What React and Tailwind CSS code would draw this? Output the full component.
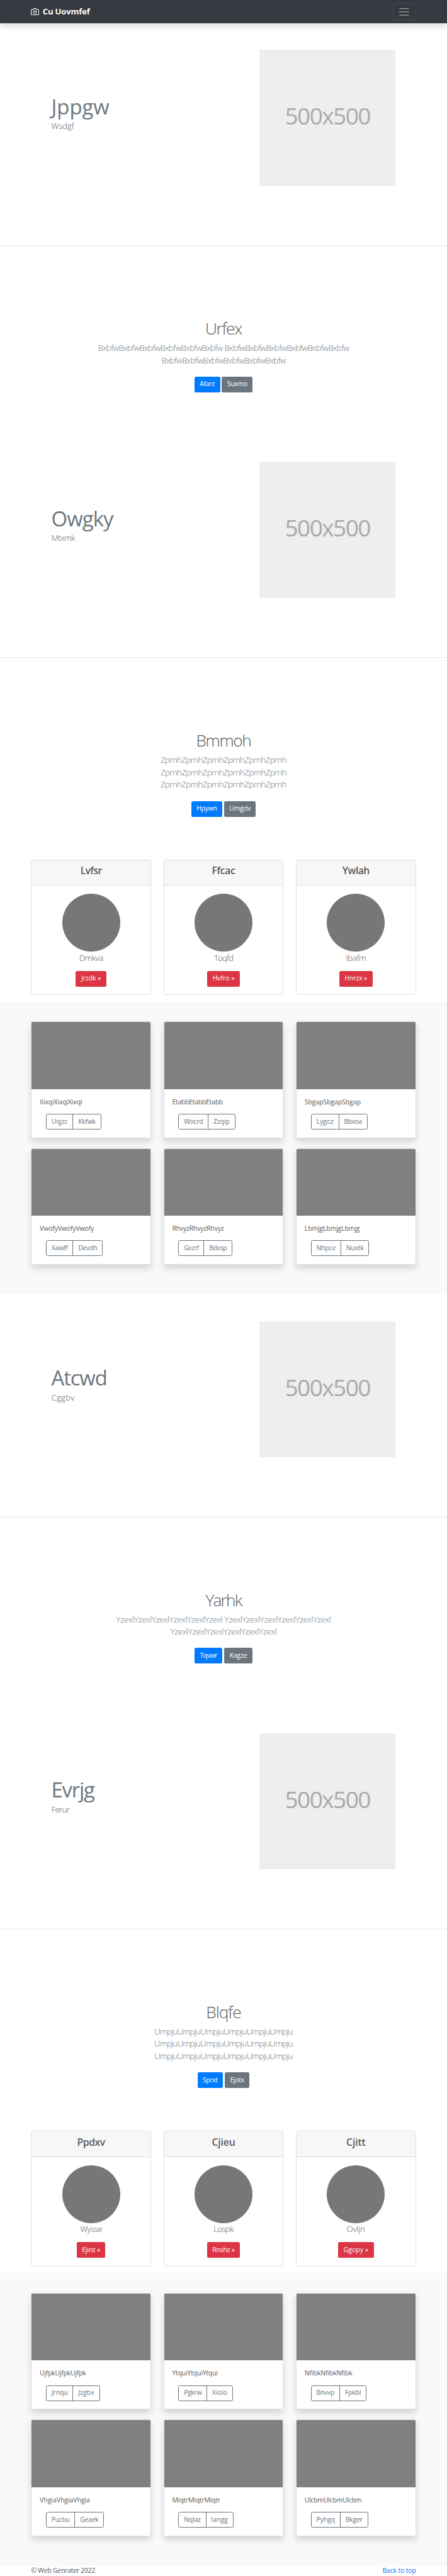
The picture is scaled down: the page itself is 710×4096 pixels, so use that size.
import React, { useLayoutEffect, useRef, useState } from "react";

/* A single-line label whose tracking is adjusted so that it fills `w` pixels. */
function Fit({ w, children }) {
  const ref = useRef(null);
  const [spacing, setSpacing] = useState(0);
  useLayoutEffect(() => {
    const el = ref.current;
    const previous = el.style.letterSpacing;
    el.style.letterSpacing = "0px";
    const natural = el.getBoundingClientRect().width;
    el.style.letterSpacing = previous;
    setSpacing((w - natural) / el.textContent.length);
  }, [w, children]);
  return (
    <span ref={ref} className="inline-block whitespace-nowrap" style={{ letterSpacing: `${spacing}px` }}>
      {children}
    </span>
  );
}

function Navbar() {
  return (
    <header className="relative z-10 flex h-[36.83px] items-center justify-between bg-[#343a40] px-[49.3px] shadow-[0_5.3px_10.5px_rgba(0,0,0,0.15)]">
      <a className="flex items-center text-white">
        <svg
          className="mr-[5.3px] h-[13.15px] w-[13.15px]"
          viewBox="0 0 24 24"
          fill="none"
          stroke="currentColor"
          strokeWidth="2"
          strokeLinecap="round"
          strokeLinejoin="round"
        >
          <path d="M23 19a2 2 0 0 1-2 2H3a2 2 0 0 1-2-2V8a2 2 0 0 1 2-2h4l2-3h6l2 3h4a2 2 0 0 1 2 2z" />
          <circle cx="12" cy="13" r="4" />
        </svg>
        <strong className="text-[13.15px] leading-[19.7px] font-bold">
          <Fit w={75}>Cu Uovmfef</Fit>
        </strong>
      </a>
      <button className="flex h-[26.3px] w-[36.8px] items-center justify-center rounded-[2.6px] border border-white/10">
        <svg className="h-[19.7px] w-[19.7px]" viewBox="0 0 30 30" stroke="rgba(255,255,255,0.5)" strokeWidth="2" strokeLinecap="round" strokeMiterlimit="10">
          <path d="M4 7h22M4 15h22M4 23h22" />
        </svg>
      </button>
    </header>
  );
}

function Featurette({ title, lead }) {
  return (
    <>
      <section className="flex h-[353.2px] justify-between px-[81.6px]">
        <div className="pt-[112.9px]">
          <h2 className="text-[32.87px] leading-[39.4px] font-normal text-[#6c757d]">
            <Fit w={title[1]}>{title[0]}</Fit>
          </h2>
          <p className="mt-[1.8px] text-[13.15px] leading-[19.72px] font-light text-[#5a5a5a]">
            <Fit w={lead[1]}>{lead[0]}</Fit>
          </p>
        </div>
        <div className="mt-[42.1px] flex h-[216.6px] w-[216.4px] items-center justify-center bg-[#eeeeee] pb-[6px]">
          <span className="text-[37px] leading-[44px] text-[#aaaaaa]">
            <Fit w={135.5}>500x500</Fit>
          </span>
        </div>
      </section>
      <hr className="h-px border-0 bg-[#e8e8e8]" />
    </>
  );
}

function Jumbotron({ title, lines, primary, secondary, tall }) {
  return (
    <section className={tall ? "h-[320.6px] pt-[116.4px] text-center" : "h-[300.85px] pt-[116.4px] text-center"}>
      <h1 className="text-[26.3px] leading-[31.6px] font-light text-[#5a5a5a]">
        <Fit w={title[1]}>{title[0]}</Fit>
      </h1>
      <div className="mt-[4.95px] text-[13.15px] leading-[19.72px] font-light text-[#6c757d]">
        {lines.map(([line, w], i) => (
          <p key={i} className="h-[19.72px]">
            <Fit w={w}>{line}</Fit>
          </p>
        ))}
      </div>
      <div className="mt-[15.4px] flex justify-center gap-[2.8px] text-[10.52px] text-white">
        <a className="flex h-[25px] items-center rounded-[2.6px] bg-[#007bff] px-[8.5px]">
          <Fit w={primary[1]}>{primary[0]}</Fit>
        </a>
        <a className="flex h-[25px] items-center rounded-[2.6px] bg-[#6c757d] px-[8.5px]">
          <Fit w={secondary[1]}>{secondary[0]}</Fit>
        </a>
      </div>
    </section>
  );
}

function ProfileCards({ cards }) {
  return (
    <section className="grid h-[226.2px] grid-cols-3 items-start gap-[19.7px] px-[49.3px] text-center">
      {cards.map(([title, name, action]) => (
        <article key={title[0]} className="h-[215.6px] rounded-[2.6px] border border-[#dfdfdf]">
          <h4 className="h-[40.5px] border-b border-[#dfdfdf] bg-[#f7f7f7] pt-[7.6px] text-[15.78px] leading-[19px] font-semibold text-[#5a5a5a]">
            <Fit w={title[1]}>{title[0]}</Fit>
          </h4>
          <div className="flex flex-col items-center pt-[13.15px]">
            <div className="h-[92.04px] w-[92.04px] rounded-full bg-[#777777]" />
            <p className="mt-[0.4px] h-[19.72px] text-[13.15px] leading-[19.72px] font-light text-[#5a5a5a]">
              <Fit w={name[1]}>{name[0]}</Fit>
            </p>
            <a className="mt-[10.2px] flex h-[25px] items-center rounded-[2.6px] bg-[#dc3545] px-[8.5px] text-[10.52px] text-white">
              <Fit w={action[1]}>{`${action[0]} »`}</Fit>
            </a>
          </div>
        </article>
      ))}
    </section>
  );
}

function Album({ items }) {
  return (
    <section className="grid h-[465.6px] grid-cols-3 content-start gap-x-[19.7px] gap-y-[16px] bg-[#f8f9fa] px-[49.3px] pt-[31.6px]">
      {items.map(([text, left, right]) => (
        <article
          key={text[0]}
          className="h-[185.3px] overflow-hidden rounded-[2.6px] border border-[#dfdfdf] bg-white shadow-[0_5.3px_10.5px_rgba(0,0,0,0.15)]"
        >
          <div className="h-[106.2px] bg-[#808080]" />
          <div className="px-[12.8px] pt-[13.15px]">
            <p className="h-[15.78px] text-[10.52px] leading-[15.78px] text-[#5a5a5a]">
              <Fit w={text[1]}>{text[0]}</Fit>
            </p>
            <div className="mt-[10.5px] ml-[9.9px] flex h-[25px] w-fit divide-x divide-[#6c757d] rounded-[2.6px] border border-[#6c757d] text-[10.52px] text-[#6c757d]">
              <span className="flex items-center px-[7.8px]">
                <Fit w={left[1]}>{left[0]}</Fit>
              </span>
              <span className="flex items-center px-[7.8px]">
                <Fit w={right[1]}>{right[0]}</Fit>
              </span>
            </div>
          </div>
        </article>
      ))}
    </section>
  );
}

export default function App() {
  return (
    <div className="w-[710px] overflow-hidden bg-white font-['Segoe_UI','Open_Sans',sans-serif]">
      <Navbar />

      <Featurette title={["Jppgw", 92]} lead={["Wsdgf", 35.6]} />
      <Jumbotron
        title={["Urfex", 58]}
        lines={[
          ["BxbfwBxbfwBxbfwBxbfwBxbfwBxbfw BxbfwBxbfwBxbfwBxbfwBxbfwBxbfw", 399],
          ["BxbfwBxbfwBxbfwBxbfwBxbfwBxbfw", 197.4],
        ]}
        primary={["Afarz", 23.7]}
        secondary={["Suxmo", 31.9]}
      />
      <Featurette title={["Owgky", 98]} lead={["Mtxmk", 37]} />
      <Jumbotron
        tall
        title={["Bmmoh", 87]}
        lines={[
          ["ZprnhZprnhZprnhZprnhZprnhZprnh", 200],
          ["ZprnhZprnhZprnhZprnhZprnhZprnh", 200],
          ["ZprnhZprnhZprnhZprnhZprnhZprnh", 200],
        ]}
        primary={["Hpywn", 32.4]}
        secondary={["Umgdv", 33.7]}
      />
      <ProfileCards
        cards={[
          [["Lvfsr", 34], ["Dmkva", 37.7], ["Jrzdk", 31.5]],
          [["Ffcac", 37], ["Toqfd", 30], ["Hvfro", 34.6]],
          [["Ywlah", 43], ["Ibafm", 32], ["Hnrzx", 35.5]],
        ]}
      />
      <Album
        items={[
          [["XixqiXixqiXixqi", 67.3], ["Uqjzc", 25.8], ["Kkfwk", 27.6]],
          [["EtabbEtabbEtabb", 80.5], ["Wocrd", 30.2], ["Zzqip", 25.8]],
          [["SbgapSbgapSbgap", 89.3], ["Lygoz", 27.4], ["Bbxoa", 28.3]],
          [["VwofyVwofyVwofy", 86], ["Xawff", 25.8], ["Devdh", 30.2]],
          [["RhvyzRhvyzRhvyz", 82], ["Gccrf", 23.5], ["Bdxsp", 28]],
          [["LbmjgLbmjgLbmjg", 87.5], ["Nhpce", 30.6], ["Nuxtk", 28]],
        ]}
      />

      <Featurette title={["Atcwd", 88]} lead={["Cggbv", 37]} />
      <Jumbotron
        title={["Yarhk", 57]}
        lines={[
          ["YzexlYzexlYzexlYzexlYzexlYzexl YzexlYzexlYzexlYzexlYzexlYzexl", 340.8],
          ["YzexlYzexlYzexlYzexlYzexlYzexl", 168.7],
        ]}
        primary={["Tqvwr", 27.4]}
        secondary={["Kxgze", 27.8]}
      />
      <Featurette title={["Evrjg", 68]} lead={["Ferur", 28.5]} />
      <Jumbotron
        tall
        title={["Blqfe", 55.5]}
        lines={[
          ["UmpjuUmpjuUmpjuUmpjuUmpjuUmpju", 220],
          ["UmpjuUmpjuUmpjuUmpjuUmpjuUmpju", 220],
          ["UmpjuUmpjuUmpjuUmpjuUmpjuUmpju", 220],
        ]}
        primary={["Sprxt", 23.7]}
        secondary={["Ejotx", 22.4]}
      />
      <ProfileCards
        cards={[
          [["Ppdxv", 44.4], ["Wysse", 34.5], ["Ejinz", 28.7]],
          [["Cjieu", 37], ["Lospk", 31.4], ["Rnshz", 35.5]],
          [["Cjitt", 30.5], ["Ovljn", 29], ["Ggopy", 39.6]],
        ]}
      />
      <Album
        items={[
          [["UjfpkUjfpkUjfpk", 73.5], ["Jrnqu", 25.8], ["Jzgbx", 25.8]],
          [["YtquiYtquiYtqui", 72.3], ["Pgkrw", 28], ["Xiolo", 24]],
          [["NfibkNfibkNfibk", 75.7], ["Bnvvp", 28.8], ["Fpkbl", 25.3]],
          [["VhgiaVhgiaVhgia", 79.8], ["Pucbu", 28.8], ["Geaek", 29.3]],
          [["MiqtrMiqtrMiqtr", 76.5], ["Nqlaz", 26.6], ["Iangg", 26.6]],
          [["UlcbmUlcbmUlcbm", 90.5], ["Pyhgq", 29.7], ["Bkger", 27.1]],
        ]}
      />

      <footer className="flex h-[15.8px] justify-between px-[49.3px] text-[10.52px] leading-[15.8px] text-[#5a5a5a]">
        <span>
          <Fit w={102}>© Web Genrater 2022</Fit>
        </span>
        <a className="text-[#007bff]">
          <Fit w={53.3}>Back to top</Fit>
        </a>
      </footer>
    </div>
  );
}
